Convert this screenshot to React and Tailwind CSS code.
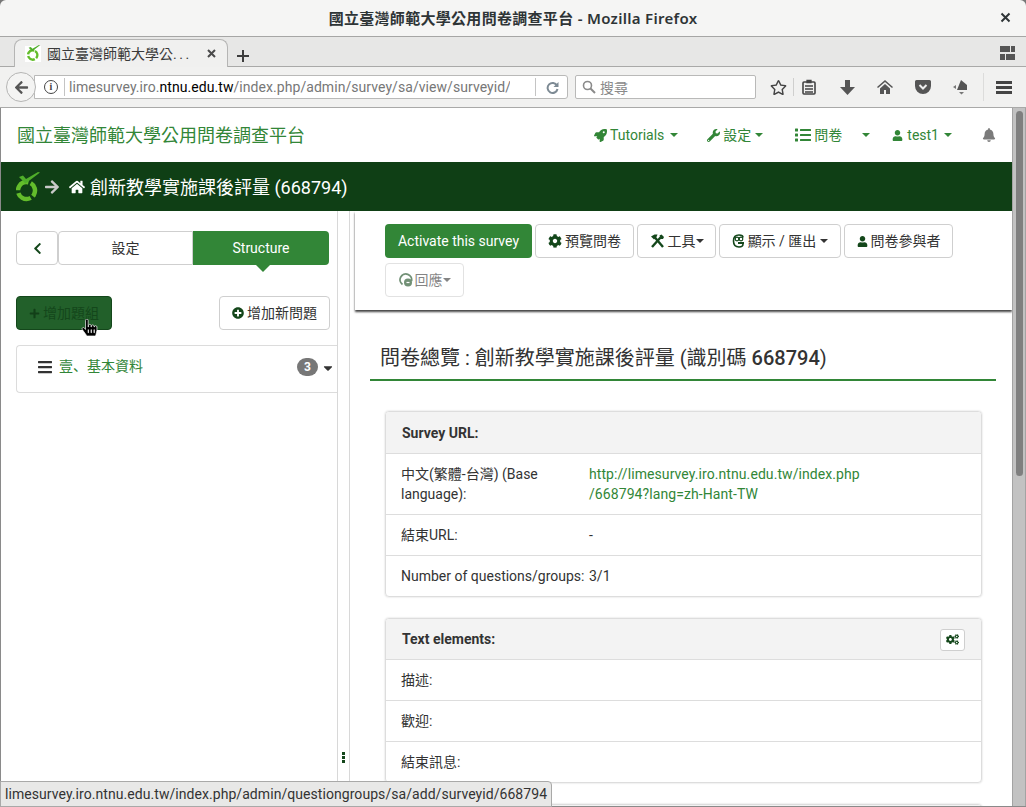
import React from "react";
import { FaRocket, FaWrench, FaList, FaUser, FaBell, FaHome, FaCog, FaCogs, FaPlus, FaPlusCircle, FaBars, FaChevronLeft, FaCaretDown, FaArrowRight, FaArrowLeft, FaRegStar, FaHandPointer } from "react-icons/fa";

const font = "font-['Roboto','Noto_Sans_CJK_TC',sans-serif]";

function Caret({ className = "" }) {
  return <span className={`inline-block w-0 h-0 border-x-[4px] border-x-transparent border-t-[4px] border-t-current ${className}`} />;
}

function Logo({ size = 24 }) {
  return (
    <svg width={size} height={size * 1.25} viewBox="0 0 24 30">
      <circle cx="10.500" cy="18.500" r="8.500" fill="none" stroke="#63bd2b" strokeWidth="4.500" strokeDasharray="15 2.800" transform="rotate(-60 10.500 18.500)" />
      <path d="M3 5 7 3.500 10 7 22 0 24 .500 9.500 11.500z" fill="#4fae2a" />
    </svg>
  );
}

function TitleBar() {
  return (
    <div className="h-[37px] shrink-0 bg-[#f5f5f4] border-b border-[#a6a6a5] rounded-t-[6px] flex items-center relative">
      <div className="flex-1 text-center text-[15px] font-semibold text-[#2e3436] tracking-[0.3px] font-['Noto_Sans','Noto_Sans_CJK_TC',sans-serif]">國立臺灣師範大學公用問卷調查平台 - Mozilla Firefox</div>
      <span className="absolute right-[15px] top-[12px]">
        <svg width="11" height="11" viewBox="0 0 11 11"><path d="M1.500 1.500l8 8M9.500 1.500l-8 8" stroke="#2e3436" strokeWidth="2" /></svg>
      </span>
    </div>
  );
}

function TabBar() {
  return (
    <div className="h-[30px] shrink-0 bg-[#e7e7e6] border-b border-[#a9a9a8] flex items-end pl-[14px] pr-[11px] relative">
      <div className="w-[214px] h-[28px] bg-[#f0f0ef] border border-b-0 border-[#b5b5b4] rounded-t-[8px] flex items-center pl-[10px] pr-[11px] -mb-px">
        <span className="w-[16px] h-[16px] bg-white flex items-center justify-center mr-[6px]"><Logo size={13} /></span>
        <span className="text-[14px] text-[#3a3a3a] font-['Noto_Sans_CJK_TC',sans-serif] flex-1 whitespace-nowrap leading-none">國立臺灣師範大學公<span className="tracking-[2.500px] font-['Roboto',sans-serif]">...</span></span>
        <svg width="9" height="9" viewBox="0 0 9 9"><path d="M1 1l7 7M8 1l-7 7" stroke="#4a4a4a" strokeWidth="2" /></svg>
      </div>
      <span className="ml-[8px] mb-[3px] text-[#3d3d3d]">
        <svg width="14" height="14" viewBox="0 0 14 14"><path d="M7 1v12M1 7h12" stroke="#3d3d3d" strokeWidth="2" /></svg>
      </span>
      <span className="ml-auto mb-[6px]">
        <svg width="15" height="14" viewBox="0 0 15 14"><path d="M0 0h10v6H0zM11 0h4v6h-4zM0 8h5v6H0zM6 8h9v6H6z" fill="#555" /></svg>
      </span>
    </div>
  );
}

function ChromeIcon({ children, className = "" }) {
  return <span className={`w-[16px] ml-[22px] flex justify-center text-[#555] ${className}`}>{children}</span>;
}

function NavBar() {
  return (
    <div className="h-[41px] shrink-0 bg-[#f1f1f0] border-b border-[#a9a9a8] flex items-center pl-[6px] relative">
      <span className="w-[30px] h-[30px] rounded-full border border-[#b5b5b4] bg-[#f4f4f3] flex items-center justify-center z-10 shrink-0">
        <FaArrowLeft className="text-[#555] text-[15px]" />
      </span>
      <div className="h-[24px] w-[534px] -ml-[2px] bg-white border border-[#b9b9b8] rounded-r-[3px] flex items-center font-['Roboto',sans-serif] text-[14px] shrink-0">
        <span className="w-[14px] h-[14px] ml-[9px] rounded-full border border-[#444] text-[#444] text-[10px] leading-[12px] text-center font-bold font-['Liberation_Serif',serif]">i</span>
        <span className="w-px h-[18px] bg-[#c4c4c4] ml-[6px] mr-[4px]" />
        <span className="whitespace-nowrap overflow-hidden w-[441px] text-[#777] tracking-[0.06px]">limesurvey.iro.<span className="text-black">ntnu.edu.tw</span>/index.php/admin/survey/sa/view/surveyid/</span>
        <span className="w-px h-[18px] bg-[#c4c4c4] ml-[25px]" />
        <svg className="ml-[10px]" width="13" height="13" viewBox="0 0 13 13"><path d="M11 4.500A5 5 0 1 0 11.500 8" fill="none" stroke="#7d8a94" strokeWidth="2" /><path d="M12.500 1v5h-5z" fill="#7d8a94" /></svg>
      </div>
      <div className="ml-[7px] h-[24px] w-[181px] bg-white border border-[#b9b9b8] rounded-[2px] flex items-center pl-[6px] shrink-0">
        <svg width="14" height="14" viewBox="0 0 14 14"><circle cx="5.500" cy="5.500" r="4" fill="none" stroke="#8a8a8a" strokeWidth="1.600" /><path d="M8.500 8.500l4.500 4.500" stroke="#8a8a8a" strokeWidth="2" /></svg>
        <span className="ml-[4px] text-[14px] text-[#8a8a8a] font-['Noto_Sans_CJK_TC',sans-serif] leading-none">搜尋</span>
      </div>
      <span className="ml-[13px] w-[18px] flex justify-center"><FaRegStar className="text-[#444] text-[17px]" /></span>
      <span className="w-px h-[18px] bg-[#cfcfce] ml-[6px]" />
      <span className="ml-[7px] w-[16px] flex justify-center">
        <svg width="14" height="16" viewBox="0 0 14 16"><rect x="1" y="3" width="12" height="12" rx="1" fill="none" stroke="#444" strokeWidth="1.600" /><path d="M3 7h8M3 10h8M3 13h8M5 1.500h4v2H5z" stroke="#444" strokeWidth="1.300" fill="#444" /></svg>
      </span>
      <ChromeIcon>
        <svg width="15" height="15" viewBox="0 0 15 15"><path d="M5 0h5v7h5l-7.500 8L0 7h5z" fill="#555" /></svg>
      </ChromeIcon>
      <ChromeIcon>
        <svg width="16" height="14" viewBox="0 0 16 14"><path d="M8 0 0 7l1 1 7-6 7 6 1-1z M8 4 3 8.500V14h4v-4h2v4h4V8.500z" fill="#555" /></svg>
      </ChromeIcon>
      <ChromeIcon>
        <svg width="16" height="14" viewBox="0 0 16 14"><path d="M1.500 0h13A1.500 1.500 0 0 1 16 1.500V6A8 8 0 0 1 0 6V1.500A1.500 1.500 0 0 1 1.500 0z" fill="#555" /><path d="M4.500 5 8 8.500 11.500 5" fill="none" stroke="#eee" strokeWidth="2" /></svg>
      </ChromeIcon>
      <ChromeIcon>
        <svg width="16" height="16" viewBox="0 0 16 16"><path d="M8 1 14 6 14 11 4 11z" fill="#555" /><path d="M3 6 0 8l3 2zM6 13h5l-2.500 2.500z" fill="#777" /></svg>
      </ChromeIcon>
      <span className="w-px h-[28px] bg-[#dcdcdb] ml-[14px]" />
      <span className="ml-[12px] flex flex-col gap-[2px]">
        <span className="block w-[16px] h-[3px] bg-[#444]" />
        <span className="block w-[16px] h-[3px] bg-[#444]" />
        <span className="block w-[16px] h-[3px] bg-[#444]" />
      </span>
    </div>
  );
}

function TopNav() {
  const item = "flex items-center text-[14px] text-[#328637] whitespace-nowrap";
  return (
    <div className="h-[54px] shrink-0 bg-white flex items-center pl-[16px]">
      <div className="text-[18px] text-[#328637] font-normal">國立臺灣師範大學公用問卷調查平台</div>
      <div className="ml-auto flex items-center h-full">
        <span className={item}><FaRocket className="text-[13px] mr-[3px]" />Tutorials<Caret className="ml-[6px]" /></span>
        <span className={`${item} ml-[29px]`}><FaWrench className="text-[13px] mr-[3px]" />設定<Caret className="ml-[4px]" /></span>
        <span className={`${item} ml-[32px]`}><FaList className="text-[16px] mr-[3px]" />問卷<Caret className="ml-[20px]" /></span>
        <span className={`${item} ml-[22px]`}><FaUser className="text-[11px] mr-[4px]" />test1<Caret className="ml-[5px]" /></span>
        <span className="ml-[30px] mr-[16px] text-[#7b7b7b]"><FaBell className="text-[14px]" /></span>
      </div>
    </div>
  );
}

function Sidebar() {
  return (
    <div className="w-[336px] shrink-0 pl-[15px] pt-[20px] relative">
      <div className="flex h-[34px] w-[313px] text-[14px]">
        <span className="w-[42px] h-full border border-[#cfcfcf] rounded-[4px] flex items-center justify-center text-[#14471b]"><FaChevronLeft className="text-[13px]" /></span>
        <span className="w-[135px] h-full border border-[#cfcfcf] rounded-l-[4px] flex items-center justify-center text-[#333]">設定</span>
        <span className="flex-1 h-full bg-[#328637] rounded-r-[4px] text-white flex items-center justify-center relative">
          Structure
          <span className="absolute left-[63px] -bottom-[7px] w-0 h-0 border-x-[7px] border-x-transparent border-t-[7px] border-t-[#328637]" />
        </span>
      </div>
      <div className="flex w-[314px] justify-between mt-[31px] text-[14px]">
        <span className="w-[96px] h-[34px] bg-[#22602a] border border-[#14471b] rounded-[4px] flex items-center justify-center text-[#14471b] relative">
          <FaPlus className="text-[11px] mr-[3px] text-[#123f18]" />增加題組
          <span className="absolute left-[64px] top-[22px] text-black text-[17px]"><FaHandPointer stroke="#fff" strokeWidth={20} /></span>
        </span>
        <span className="w-[111px] h-[34px] bg-white border border-[#cfcfcf] rounded-[4px] flex items-center justify-center text-[#14471b]">
          <FaPlusCircle className="text-[12px] mr-[3px]" /><span className="text-[#333]">增加新問題</span>
        </span>
      </div>
      <div className="mt-[15px] w-[321px] h-[48px] border border-r-0 border-[#dcdcdc] rounded-l-[4px] flex items-center pl-[20px] pb-[5px] text-[14px]">
        <FaBars className="text-[#333] text-[16px] mr-[6px]" />
        <span className="text-[#328637] font-['Roboto','Noto_Sans_CJK_JP',sans-serif]">壹、基本資料</span>
        <span className="ml-auto mr-[1px] w-[21px] h-[18px] rounded-full bg-[#777] text-white text-[12px] font-bold flex items-center justify-center">3</span>
        <FaCaretDown className="ml-[2px] mr-[2px] mt-[3px] text-[#333] text-[14px]" />
      </div>
    </div>
  );
}

function ToolBtn({ children, className = "" }) {
  return <span className={`h-[34px] bg-white border border-[#cfcfcf] rounded-[4px] flex items-center justify-center text-[14px] text-[#333] whitespace-nowrap ${className}`}>{children}</span>;
}

function ToolsIcon() {
  return (
    <svg className="mr-[3px]" width="15" height="14" viewBox="0 0 15 14">
      <path d="M4.500 3 13 13" stroke="#14471b" strokeWidth="2.400" />
      <path d="M1 2.500 4.500.500h3L6.500 3 4 5.500z" fill="#14471b" />
      <path d="M10.500 3.500 2 13" stroke="#14471b" strokeWidth="2.400" />
      <path d="M9.500 1.500 11.500.500 14 3 13 5h-2.500z" fill="#14471b" />
    </svg>
  );
}

function Toolbar() {
  return (
    <div className="h-[99px] shrink-0 ml-[5px] pl-[30px] pt-[13px] flex flex-wrap content-start gap-x-[3px] gap-y-[5px] shadow-[0_2px_2px_#444] relative">
      <span className="h-[34px] w-[147px] bg-[#328637] rounded-[4px] flex items-center justify-center text-white text-[14px]">Activate this survey</span>
      <ToolBtn className="w-[99px]"><FaCog className="text-[14px] mr-[3px] text-[#14471b]" />預覽問卷</ToolBtn>
      <ToolBtn className="w-[79px]"><ToolsIcon />工具<Caret /></ToolBtn>
      <ToolBtn className="w-[122px]">
        <svg className="mr-[2px]" width="14" height="14" viewBox="0 0 14 14"><path d="M11 3.500C11 1.500 9.500 1 7 1 3.500 1 1.500 2.500 1.500 7s2 6 5.500 6c2.500 0 4-1 4-3" fill="none" stroke="#14471b" strokeWidth="1.600" /><circle cx="5" cy="5" r="1.800" fill="none" stroke="#14471b" strokeWidth="1.200" /><circle cx="9" cy="5" r="1.800" fill="none" stroke="#14471b" strokeWidth="1.200" /><path d="M6 8h6v2H6z" fill="#14471b" /></svg>
        顯示 / 匯出<Caret className="ml-[4px]" />
      </ToolBtn>
      <ToolBtn className="w-[109px]"><FaUser className="text-[11px] mr-[3px] text-[#14471b]" />問卷參與者</ToolBtn>
      <ToolBtn className="w-[79px] opacity-60 rounded-[2px]">
        <svg className="mr-[1px]" width="15" height="14" viewBox="0 0 15 14"><path d="M3.500 11.500A5.800 5.800 0 1 1 12.500 8" fill="none" stroke="#14471b" strokeWidth="1.800" /><circle cx="9" cy="9.500" r="4" fill="#14471b" /><path d="M7.500 9.500h3" stroke="#fff" strokeWidth="1.200" /></svg>
        回應<Caret />
      </ToolBtn>
    </div>
  );
}

function Row({ label, children, className = "" }) {
  return (
    <div className={`flex border-t border-[#dddddd] px-[15px] py-[10px] text-[14px] leading-[20px] text-[#333] ${className}`}>
      <div className="w-[188px] shrink-0">{label}</div>
      <div>{children}</div>
    </div>
  );
}

function Panel({ title, action, children, headerClass = "h-[41px]" }) {
  return (
    <div className="w-[597px] ml-[35px] border border-[#dddddd] rounded-[4px] shadow-[0_0_2px_#ccc] overflow-hidden">
      <div className={`bg-[#f3f3f3] flex items-center pl-[16px] pr-[16px] text-[14px] font-bold text-[#333] ${headerClass}`}>
        {title}
        {action}
      </div>
      {children}
    </div>
  );
}

function Main() {
  return (
    <div className="flex-1 min-w-0 overflow-hidden">
      <Toolbar />
      <div className="pl-[20px] pr-[16px]">
        <div className="mt-[31px] h-[40px] border-b-2 border-[#328637] pl-[10px] text-[20px] leading-[35px] text-[#333] whitespace-nowrap">
          問卷總覽 : 創新教學實施課後評量 (識別碼 <span className="font-medium">668794</span>)
        </div>
      </div>
      <div className="mt-[30px] flex flex-col gap-[21px]">
        <Panel title="Survey URL:" headerClass="h-[41px] pt-[2px]">
          <Row label="中文(繁體-台灣) (Base language):">
            <span className="text-[#328637] tracking-[0.08px]">http://limesurvey.iro.ntnu.edu.tw/index.php<br />/668794?lang=zh-Hant-TW</span>
          </Row>
          <Row label="結束URL:">-</Row>
          <Row label={<span className="whitespace-nowrap">Number of questions/groups:</span>}>3/1</Row>
        </Panel>
        <Panel
          title="Text elements:"
          headerClass="h-[40px] pt-[1px]"
          action={
            <span className="ml-auto w-[25px] h-[22px] bg-white border border-[#cfcfcf] rounded-[3px] flex items-center justify-center text-[#14471b]"><FaCogs className="text-[13px]" /></span>
          }
        >
          <Row label="描述:" />
          <Row label="歡迎:" />
          <Row label="結束訊息:" />
        </Panel>
        <Panel title="">
          <div />
        </Panel>
      </div>
    </div>
  );
}

export default function App() {
  return (
    <div className={`w-[1026px] h-[807px] overflow-hidden bg-[#777] flex flex-col relative ${font}`}>
      <TitleBar />
      <TabBar />
      <NavBar />
      <div className="flex-1 min-h-0 flex bg-white border-l border-b border-[#8a8a8a]">
        <div className="flex-1 min-w-0 flex flex-col">
          <TopNav />
          <div className="h-[49px] shrink-0 bg-[#0f3f15] flex items-center pl-[15px] text-white text-[18px]">
            <Logo size={24} />
            <FaArrowRight className="ml-[4px] text-[#c9c9c9] text-[16px]" />
            <FaHome className="ml-[9px] text-[16px]" />
            <span className="ml-[5px] mt-[1px]">創新教學實施課後評量 (668794)</span>
          </div>
          <div className="flex-1 min-h-0 flex">
            <Sidebar />
            <div className="w-[13px] shrink-0 border-x border-[#d8d8d8] flex items-end justify-center pb-[43px] text-[#14471b]">
              <span className="flex flex-col gap-[1px]">
                <span className="block w-[3px] h-[3px] bg-[#14471b]" />
                <span className="block w-[3px] h-[3px] bg-[#14471b]" />
                <span className="block w-[3px] h-[3px] bg-[#14471b]" />
              </span>
            </div>
            <Main />
          </div>
        </div>
        <div className="w-[14px] shrink-0 bg-[#c2c2c2] border-l border-r border-[#a3a3a3] flex justify-center">
          <div className="w-[7px] h-[365px] mt-[3px] rounded-full bg-[#7f7f7f]" />
        </div>
      </div>
      <div className="absolute left-0 bottom-0 h-[26px] w-[552px] bg-[#e8e8e7] border border-[#a9a9a8] rounded-tr-[4px] pl-[4px] text-[14px] leading-[24px] text-[#333] whitespace-nowrap tracking-[0.06px]">limesurvey.iro.ntnu.edu.tw/index.php/admin/questiongroups/sa/add/surveyid/668794</div>
    </div>
  );
}
